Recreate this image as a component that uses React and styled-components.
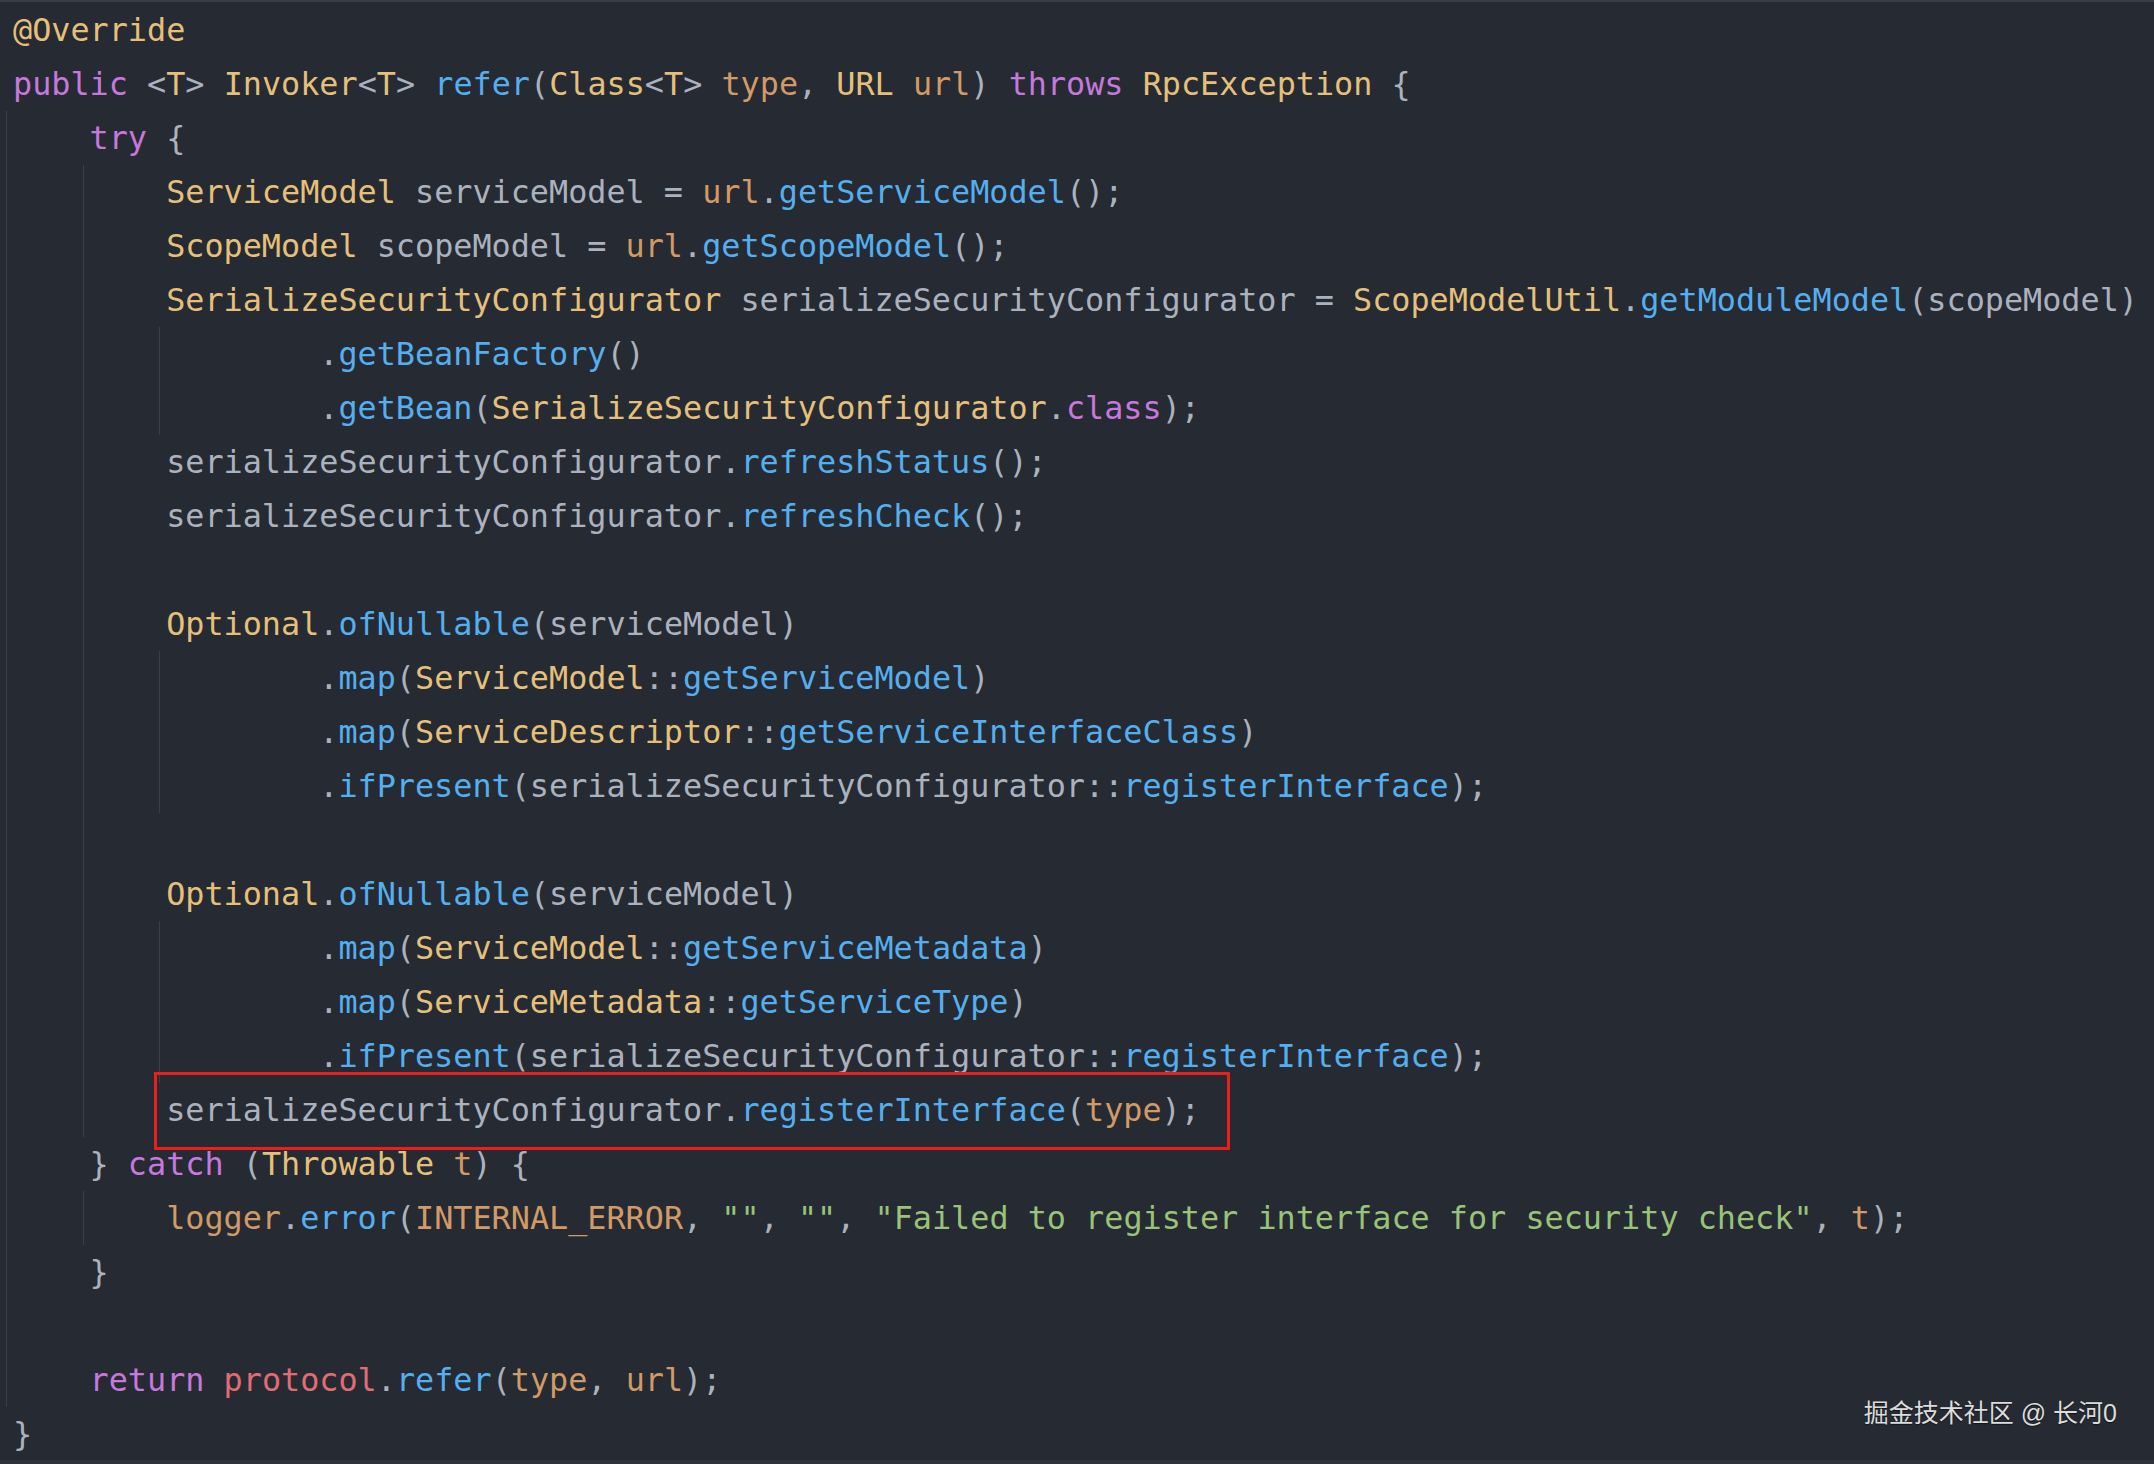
import React from 'react';
import styled, { createGlobalStyle } from 'styled-components';

const GlobalStyle = createGlobalStyle`
  html, body {
    margin: 0;
    padding: 0;
    background-color: #262a32;
    overflow: hidden;
  }
`;

const palette = {
  k: '#c678dd',
  y: '#e5c07b',
  b: '#55afef',
  o: '#d19a66',
  g: '#98c379',
  r: '#e06c75',
  t: '#abb2bf',
};

const Editor = styled.div`
  position: relative;
  width: 2154px;
  height: 1464px;
  box-sizing: border-box;
  border-top: 2px solid #3a3e47;
  border-bottom: 4px solid #2e323b;
  padding-top: 1px;
  background-color: #262a32;
  font-family: 'DejaVu Sans Mono', 'Liberation Mono', monospace;
  font-size: 31.8px;
  color: #abb2bf;
`;

const Line = styled.div`
  display: flex;
  height: 54px;
  line-height: 54px;
  padding-left: 6px;
  white-space: pre;
`;

const Indent = styled.span`
  flex: none;
  width: 4ch;
  box-sizing: border-box;
  border-left: 1px solid ${(props) => (props.$guide ? '#3a3e47' : 'transparent')};
`;

const Code = styled.span`
  position: relative;
  margin-left: 7px;
`;

const Tok = styled.span`
  color: ${(props) => palette[props.$c]};
`;

const Highlight = styled.span`
  position: absolute;
  top: -11px;
  bottom: -13px;
  left: -12px;
  right: -30px;
  border: 3px solid #e8201c;
  pointer-events: none;
`;

const Watermark = styled.div`
  position: absolute;
  right: 37px;
  bottom: 34px;
  font-family: 'Liberation Sans', 'Noto Sans CJK SC', sans-serif;
  font-size: 25px;
  line-height: 25px;
  color: #dcdcdc;
  text-shadow: 0 1px 1px rgba(0, 0, 0, 0.5);
  white-space: nowrap;
`;

// ind = indent units (4 cols each), g = how many of them carry a guide
const lines = [
  { ind: 0, g: 0, src: '[y:@Override]' },
  { ind: 0, g: 0, src: '[k:public] <[y:T]> [y:Invoker]<[y:T]> [b:refer]([y:Class]<[y:T]> [o:type], [y:URL] [o:url]) [k:throws] [y:RpcException] {' },
  { ind: 1, g: 1, src: '[k:try] {' },
  { ind: 2, g: 2, src: '[y:ServiceModel] serviceModel = [o:url].[b:getServiceModel]();' },
  { ind: 2, g: 2, src: '[y:ScopeModel] scopeModel = [o:url].[b:getScopeModel]();' },
  { ind: 2, g: 2, src: '[y:SerializeSecurityConfigurator] serializeSecurityConfigurator = [y:ScopeModelUtil].[b:getModuleModel](scopeModel)' },
  { ind: 4, g: 3, src: '.[b:getBeanFactory]()' },
  { ind: 4, g: 3, src: '.[b:getBean]([y:SerializeSecurityConfigurator].[k:class]);' },
  { ind: 2, g: 2, src: 'serializeSecurityConfigurator.[b:refreshStatus]();' },
  { ind: 2, g: 2, src: 'serializeSecurityConfigurator.[b:refreshCheck]();' },
  { ind: 2, g: 2, src: '' },
  { ind: 2, g: 2, src: '[y:Optional].[b:ofNullable](serviceModel)' },
  { ind: 4, g: 3, src: '.[b:map]([y:ServiceModel]::[b:getServiceModel])' },
  { ind: 4, g: 3, src: '.[b:map]([y:ServiceDescriptor]::[b:getServiceInterfaceClass])' },
  { ind: 4, g: 3, src: '.[b:ifPresent](serializeSecurityConfigurator::[b:registerInterface]);' },
  { ind: 2, g: 2, src: '' },
  { ind: 2, g: 2, src: '[y:Optional].[b:ofNullable](serviceModel)' },
  { ind: 4, g: 3, src: '.[b:map]([y:ServiceModel]::[b:getServiceMetadata])' },
  { ind: 4, g: 3, src: '.[b:map]([y:ServiceMetadata]::[b:getServiceType])' },
  { ind: 4, g: 3, src: '.[b:ifPresent](serializeSecurityConfigurator::[b:registerInterface]);' },
  { ind: 2, g: 2, src: 'serializeSecurityConfigurator.[b:registerInterface]([o:type]);', boxed: true },
  { ind: 1, g: 1, src: '} [k:catch] ([y:Throwable] [o:t]) {' },
  { ind: 2, g: 2, src: '[o:logger].[b:error]([o:INTERNAL_ERROR], [g:""], [g:""], [g:"Failed to register interface for security check"], [o:t]);' },
  { ind: 1, g: 1, src: '}' },
  { ind: 1, g: 1, src: '' },
  { ind: 1, g: 1, src: '[k:return] [r:protocol].[b:refer]([o:type], [o:url]);' },
  { ind: 0, g: 0, src: '}' },
];

const parse = (src) => {
  const out = [];
  const re = /\[(\w):([^\]]*)\]/g;
  let last = 0;
  let m;
  while ((m = re.exec(src))) {
    if (m.index > last) out.push(['t', src.slice(last, m.index)]);
    out.push([m[1], m[2]]);
    last = re.lastIndex;
  }
  if (last < src.length) out.push(['t', src.slice(last)]);
  return out;
};

const CodeLine = ({ line }) => (
  <Line>
    {Array.from({ length: line.ind }, (_, i) => (
      <Indent key={i} $guide={i < line.g} />
    ))}
    <Code>
      {line.src === '' ? ' ' : parse(line.src).map(([c, text], i) => (
        <Tok key={i} $c={c}>{text}</Tok>
      ))}
      {line.boxed && <Highlight />}
    </Code>
  </Line>
);

const App = () => (
  <>
    <GlobalStyle />
    <Editor>
      {lines.map((line, i) => (
        <CodeLine key={i} line={line} />
      ))}
      <Watermark>掘金技术社区 @ 长河0</Watermark>
    </Editor>
  </>
);

export default App;
